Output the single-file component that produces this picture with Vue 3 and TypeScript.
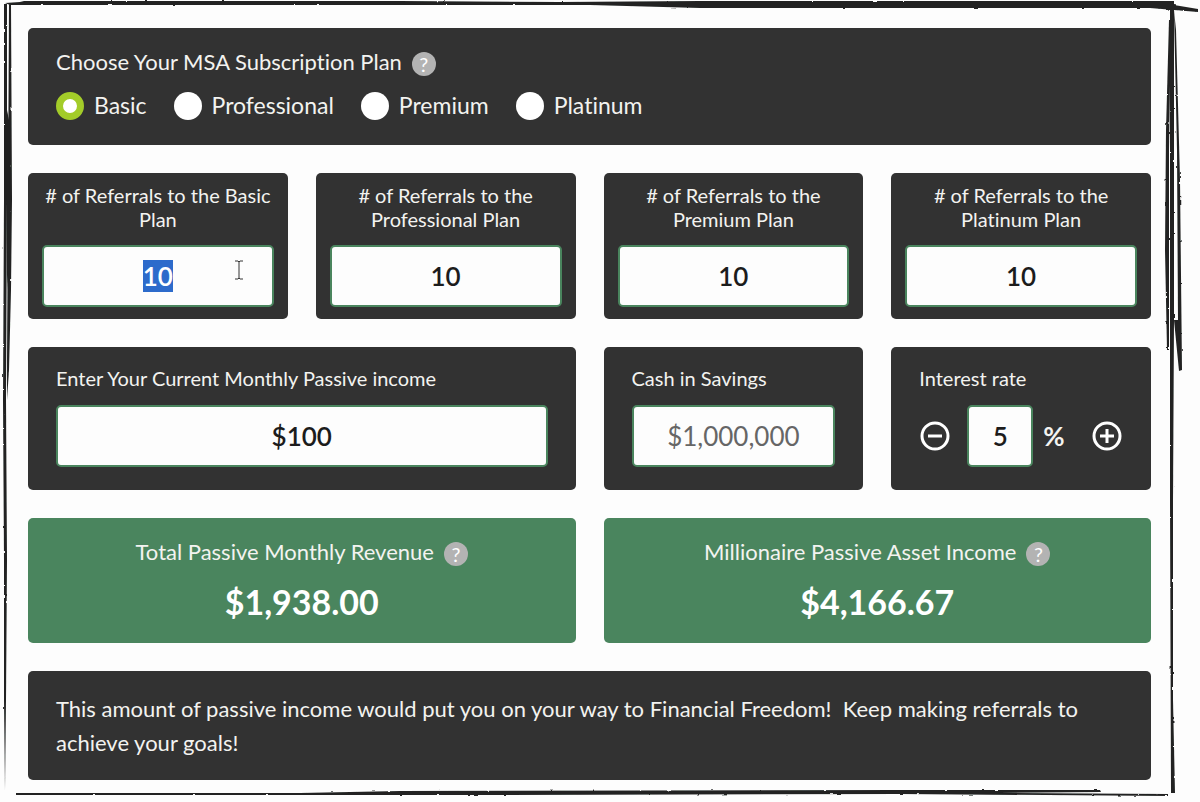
<script setup lang="ts">
import { onMounted, ref } from 'vue'

interface Plan {
  id: string
  name: string
  referrals: string
}

const plans = ref<Plan[]>([
  { id: 'basic', name: 'Basic', referrals: '10' },
  { id: 'professional', name: 'Professional', referrals: '10' },
  { id: 'premium', name: 'Premium', referrals: '10' },
  { id: 'platinum', name: 'Platinum', referrals: '10' },
])
const selectedPlan = ref('basic')
const income = ref('$100')
const savings = ref('')
const rate = ref(5)
const results = [
  { label: 'Total Passive Monthly Revenue', value: '$1,938.00' },
  { label: 'Millionaire Passive Asset Income', value: '$4,166.67' },
]
const referralInputs = ref<HTMLInputElement[]>([])

function changeRate(step: number) {
  rate.value = Math.max(0, Number(rate.value) + step)
}

onMounted(() => {
  const first = referralInputs.value[0]
  first?.focus()
  first?.select()
})
</script>

<template>
  <main class="page">
    <svg class="frame" viewBox="0 0 1200 802" preserveAspectRatio="none" aria-hidden="true">
      <defs>
        <filter id="rough" x="0" y="0" width="1200" height="802" filterUnits="userSpaceOnUse">
          <feTurbulence type="fractalNoise" baseFrequency="0.14" numOctaves="2" seed="4" result="n" />
          <feDisplacementMap in="SourceGraphic" in2="n" scale="2" xChannelSelector="R" yChannelSelector="G" />
        </filter>
      </defs>
      <g filter="url(#rough)" fill="#222423">
        <path d="M5 3 L20 2 L24 1 L400 1 L560 2 L700 1 L1000 1 L1174 1 L1174 5 L1198 9 L1198 12 L1150 8 L900 8 L700 8 L590 5 L400 5 L200 5 L100 5 L10 5 Z" />
        <path d="M4 4 L7 4 L7 200 L6 400 L7 560 L6 700 L5 790 L4 700 L4 560 L3 400 L4 200 Z" />
        <path d="M9 4 L11 5 L12 200 L11 290 L9 370 L7 400 L7 360 L8 200 Z" />
        <path d="M7 110 L9 120 L9 260 L7 290 Z" />
        <path d="M16 793 L300 793 L400 791 L900 790 L1100 790 L1101 792 L1000 793 L1168 794 L1168 796 L900 794 L500 795 L300 795 L16 795 Z" />
        <path d="M1170 8 L1174 8 L1174 320 L1173 500 L1173 700 L1175 793 L1171 793 L1170 500 L1170 320 Z" />
        <path d="M1169 20 L1171 20 L1169 150 L1169 350 L1167 350 L1165 250 L1166 130 Z" />
        <path d="M1174 10 L1176 30 L1180 180 L1182 370 L1179 371 L1174 320 L1178 320 L1177 150 Z" />
      </g>
    </svg>

    <form class="calculator" @submit.prevent>
      <fieldset class="card plans">
        <legend class="heading">
          <span>Choose Your MSA Subscription Plan</span>
          <button type="button" class="help" aria-label="Help">?</button>
        </legend>
        <div class="options">
          <label v-for="plan in plans" :key="plan.id" class="option">
            <input v-model="selectedPlan" type="radio" name="plan" :value="plan.id" />
            <span>{{ plan.name }}</span>
          </label>
        </div>
      </fieldset>

      <section v-for="plan in plans" :key="plan.id" class="card referral">
        <label :for="'ref-' + plan.id"># of Referrals to the {{ plan.name }} Plan</label>
        <div class="field-wrap">
          <input :id="'ref-' + plan.id" ref="referralInputs" v-model="plan.referrals" class="field" type="text" />
          <svg v-if="plan.id === 'basic'" class="caret" viewBox="0 0 10 20" aria-hidden="true">
            <path d="M1 1H4L5 2L6 1H9M5 2V18M1 19H4L5 18L6 19H9" fill="none" stroke="#333" />
          </svg>
        </div>
      </section>

      <section class="card amount wide">
        <label for="income">Enter Your Current Monthly Passive income</label>
        <input id="income" v-model="income" class="field" type="text" />
      </section>
      <section class="card amount">
        <label for="savings">Cash in Savings</label>
        <input id="savings" v-model="savings" class="field" type="text" placeholder="$1,000,000" />
      </section>
      <section class="card amount">
        <label for="rate">Interest rate</label>
        <div class="rate">
          <button type="button" class="step" aria-label="Decrease" @click="changeRate(-1)">
            <svg viewBox="0 0 30 30"><circle cx="15" cy="15" r="13" /><path d="M8 15H22" /></svg>
          </button>
          <input id="rate" v-model="rate" class="field" type="text" />
          <span class="percent">%</span>
          <button type="button" class="step plus" aria-label="Increase" @click="changeRate(1)">
            <svg viewBox="0 0 30 30"><circle cx="15" cy="15" r="13" /><path d="M8 15H22M15 8V22" /></svg>
          </button>
        </div>
      </section>

      <section v-for="result in results" :key="result.label" class="card result wide">
        <div class="heading">
          <span>{{ result.label }}</span>
          <button type="button" class="help" aria-label="Help">?</button>
        </div>
        <output class="total">{{ result.value }}</output>
      </section>

      <p class="card message">
        This amount of passive income would put you on your way to Financial Freedom!&nbsp; Keep making referrals to achieve your goals!
      </p>
    </form>
  </main>
</template>

<style>
body {
  margin: 0;
  background: #fdfdfd;
}
</style>

<style scoped>
.page {
  position: relative;
  box-sizing: border-box;
  min-height: 100vh;
  padding: 28px 49px 22px 28px;
  font-family: Lato, sans-serif;
  font-variant-ligatures: none;
  color: #f3f3f0;
}
.frame {
  position: absolute;
  inset: 0;
  width: 100%;
  height: 100%;
  pointer-events: none;
}
.calculator {
  display: grid;
  grid-template-columns: repeat(4, minmax(0, 1fr));
  gap: 28px;
}
.card {
  box-sizing: border-box;
  min-width: 0;
  margin: 0;
  border: 0;
  border-radius: 5px;
  background: #323232;
}
.plans,
.message {
  grid-column: 1 / -1;
}
.wide {
  grid-column: span 2;
}
.plans {
  padding: 19px 28px 24px;
}
.heading {
  display: flex;
  align-items: center;
  gap: 10px;
  padding: 0;
  font-size: 22px;
  line-height: 30px;
}
legend.heading {
  float: left;
  width: 100%;
}
.help {
  width: 24px;
  height: 24px;
  margin-top: 4px;
  padding: 0;
  border: 0;
  border-radius: 50%;
  background: #b3b3b3;
  color: #fff;
  font-family: inherit;
  font-size: 20px;
  line-height: 24px;
}
.options {
  display: flex;
  flex-wrap: wrap;
  clear: both;
  gap: 27px;
  padding-top: 13px;
}
.option {
  display: flex;
  align-items: center;
  gap: 10px;
  font-size: 23px;
  line-height: 31px;
}
.option input {
  appearance: none;
  box-sizing: border-box;
  width: 28px;
  height: 28px;
  margin: 0;
  border-radius: 50%;
  background: #fff;
}
.option input:checked {
  border: 7px solid #a3cc29;
}
.referral {
  padding: 10px 14px 12px;
  text-align: center;
}
.referral label {
  display: block;
  font-size: 20px;
  line-height: 24px;
}
.field-wrap {
  position: relative;
  margin-top: 14px;
}
.caret {
  position: absolute;
  top: 15px;
  right: 30px;
  width: 10px;
  height: 20px;
}
.field {
  display: block;
  box-sizing: border-box;
  width: 100%;
  height: 62px;
  padding: 0 8px;
  border: 2px solid #4a855e;
  border-radius: 5px;
  outline: none;
  background: #fdfdfd;
  color: #1c1c1c;
  font-family: inherit;
  font-size: 26px;
  font-weight: 600;
  text-align: center;
}
.field::placeholder {
  color: #666;
  font-weight: 400;
  opacity: 1;
}
.field::selection {
  background: #2d6bcb;
  color: #fff;
}
.amount {
  padding: 19px 28px 23px;
}
.amount > label {
  display: block;
  margin-bottom: 15px;
  font-size: 20px;
  line-height: 24px;
}
.rate {
  display: flex;
  align-items: center;
}
.rate .field {
  width: 66px;
  margin-left: 16px;
}
.percent {
  margin-left: 10px;
  font-size: 26px;
  font-weight: 700;
}
.step {
  flex: none;
  width: 32px;
  height: 32px;
  padding: 1px;
  border: 0;
  background: none;
}
.step.plus {
  margin-left: auto;
}
.step svg {
  display: block;
  fill: none;
  stroke: #fff;
  stroke-width: 3;
}
.result {
  display: flex;
  flex-direction: column;
  align-items: center;
  padding: 19px 28px 20px;
  background: #4a855e;
}
.total {
  margin-top: 14px;
  color: #fff;
  font-size: 34px;
  font-weight: 700;
  line-height: 42px;
}
.message {
  padding: 21px 28px 20px;
  font-size: 22px;
  line-height: 34px;
}
</style>
